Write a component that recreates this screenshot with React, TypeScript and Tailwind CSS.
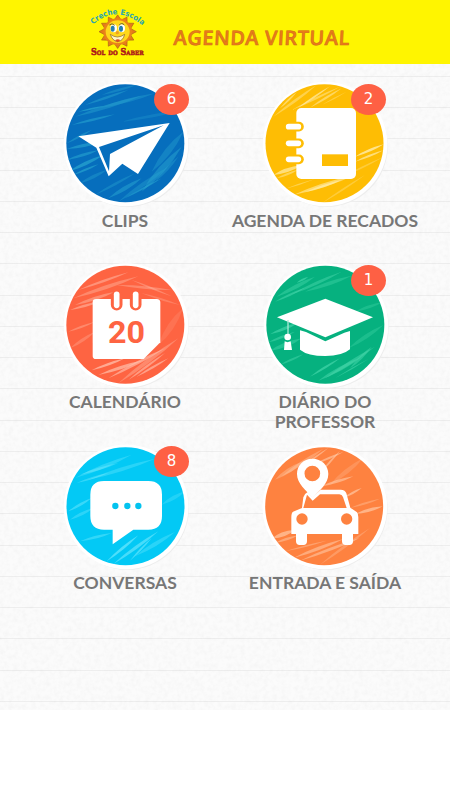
import React from 'react';

type Streak = [number, number, number, number, number, number];

/* One chalk stroke: a thin sliver that is pointed at both ends. */
function sliver([x1, y1, x2, y2, w]: Streak) {
  const mx = (x1 + x2) / 2;
  const my = (y1 + y2) / 2;
  return `M${x1} ${y1}Q${mx - w} ${my - w} ${x2} ${y2}Q${mx + w} ${my + w} ${x1} ${y1}Z`;
}

interface DiscProps {
  id: string;
  viewBox: string;
  cx: number;
  cy: number;
  color: string;
  tint: string;
  streaks: Streak[];
  children: React.ReactNode;
}

function Disc({ id, viewBox, cx, cy, color, tint, streaks, children }: DiscProps) {
  return (
    <svg className="block h-[130px] w-[130px]" viewBox={viewBox} aria-hidden="true">
      <defs>
        <clipPath id={id}>
          <circle cx={cx} cy={cy} r="177" />
        </clipPath>
      </defs>
      <circle cx={cx + 6} cy={cy + 7} r="184" fill="#ededed" />
      <circle cx={cx + 2} cy={cy + 2} r="187" fill="#ffffff" />
      <circle cx={cx} cy={cy} r="177" fill={color} />
      <g clipPath={`url(#${id})`} fill={tint}>
        {streaks.map((s, i) => (
          <path key={i} d={sliver(s)} opacity={s[5]} />
        ))}
      </g>
      {children}
    </svg>
  );
}

const clipsStreaks: Streak[] = [
  [60, 125, 260, 62, 9, 0.45], [90, 90, 220, 45, 6, 0.5], [130, 100, 300, 55, 9, 0.4],
  [50, 150, 180, 118, 6, 0.6], [140, 60, 250, 28, 6, 0.4], [70, 110, 150, 92, 4, 0.75],
  [35, 222, 140, 200, 8, 0.65], [35, 255, 130, 226, 7, 0.6], [40, 290, 145, 240, 8, 0.75],
  [55, 300, 130, 268, 5, 0.7], [75, 325, 155, 285, 8, 0.4], [160, 370, 260, 310, 9, 0.55],
  [190, 380, 340, 275, 9, 0.4], [120, 360, 240, 295, 6, 0.4], [260, 350, 380, 215, 14, 0.5],
  [290, 290, 385, 170, 14, 0.4], [210, 370, 320, 310, 4, 0.65], [200, 140, 385, 105, 8, 0.3],
  [35, 205, 110, 165, 5, 0.5], [300, 320, 370, 245, 7, 0.4],
];
const notesStreaks: Streak[] = [
  [145, 125, 275, 30, 6, 0.4], [165, 100, 215, 52, 4, 0.55], [200, 105, 345, 35, 5, 0.45],
  [220, 98, 315, 34, 4, 0.65], [255, 98, 350, 40, 5, 0.5], [290, 90, 365, 50, 3, 0.35],
  [390, 245, 476, 208, 6, 0.75], [390, 260, 475, 226, 5, 0.65], [345, 310, 475, 246, 4, 0.3],
  [145, 300, 230, 270, 9, 0.65], [155, 310, 220, 284, 5, 0.45], [180, 342, 270, 312, 3, 0.4],
  [205, 360, 390, 300, 9, 0.55], [240, 352, 350, 315, 6, 0.6], [290, 385, 420, 300, 4, 0.3],
];
const calendarStreaks: Streak[] = [
  [55, 130, 250, 64, 9, 0.4], [70, 105, 220, 52, 6, 0.5], [60, 150, 180, 110, 8, 0.45],
  [45, 165, 140, 138, 6, 0.55], [185, 90, 350, 105, 9, 0.38], [230, 75, 350, 124, 10, 0.38],
  [260, 115, 375, 150, 9, 0.3], [40, 230, 120, 200, 5, 0.4], [45, 280, 120, 230, 7, 0.3],
  [110, 346, 210, 310, 6, 0.75], [130, 360, 265, 316, 8, 0.7], [160, 370, 330, 280, 7, 0.65],
  [190, 385, 370, 250, 9, 0.4], [245, 365, 340, 310, 5, 0.65], [220, 375, 330, 294, 5, 0.6],
  [310, 270, 384, 160, 14, 0.15],
];
const diaryStreaks: Streak[] = [
  [65, 125, 180, 65, 9, 0.45], [110, 118, 260, 50, 7, 0.5], [150, 110, 290, 62, 9, 0.4],
  [125, 83, 160, 65, 4, 0.7], [60, 140, 150, 98, 5, 0.6], [45, 238, 130, 203, 7, 0.65],
  [40, 262, 120, 230, 6, 0.55], [45, 288, 140, 250, 10, 0.45], [75, 330, 145, 298, 5, 0.5],
  [165, 365, 255, 310, 5, 0.7], [190, 377, 320, 306, 9, 0.55], [210, 370, 360, 275, 7, 0.55],
  [240, 370, 340, 312, 3, 0.6], [280, 280, 385, 210, 9, 0.35], [300, 170, 385, 140, 7, 0.35],
  [285, 340, 350, 275, 7, 0.55],
];
const chatStreaks: Streak[] = [
  [60, 120, 230, 50, 9, 0.28], [75, 110, 190, 75, 6, 0.35], [100, 125, 300, 62, 9, 0.28],
  [65, 135, 160, 105, 5, 0.35], [40, 220, 110, 180, 6, 0.4], [45, 245, 115, 210, 7, 0.3],
  [75, 310, 170, 285, 7, 0.35], [155, 370, 250, 292, 6, 0.55], [175, 378, 310, 280, 7, 0.5],
  [225, 368, 290, 300, 4, 0.5], [240, 355, 360, 282, 9, 0.28], [320, 200, 390, 160, 9, 0.22],
];
const rideStreaks: Streak[] = [
  [105, 125, 190, 70, 10, 0.35], [125, 115, 250, 32, 8, 0.35], [180, 90, 265, 30, 4, 0.55],
  [220, 80, 310, 42, 5, 0.55], [240, 105, 300, 38, 4, 0.55], [245, 145, 340, 115, 7, 0.55],
  [270, 140, 370, 60, 10, 0.22], [310, 180, 365, 150, 5, 0.6], [345, 228, 428, 205, 8, 0.6],
  [330, 210, 420, 182, 5, 0.35], [95, 302, 165, 275, 10, 0.6], [105, 315, 175, 292, 6, 0.45],
  [135, 340, 260, 308, 4, 0.4], [160, 360, 310, 303, 8, 0.5], [180, 368, 360, 300, 7, 0.5],
  [240, 380, 390, 270, 6, 0.3],
];

function ClipsIcon() {
  return (
    <Disc id="disc-clips" viewBox="15 9 390 390" cx={211} cy={205} color="#066ebd" tint="#27a3cf" streaks={clipsStreaks}>
      <path fill="#fff" d="M70 184 344 144 249 297 202 266 161 304 124 218Z" />
      <path fill="#066ebd" d="M132 216 326 151 165 237 162 289Z" />
    </Disc>
  );
}

function NotesIcon() {
  return (
    <Disc id="disc-notes" viewBox="105 9 390 390" cx={298.5} cy={205} color="#febd04" tint="#fff0b8" streaks={notesStreaks}>
      <rect x="214" y="99" width="179" height="213" rx="15" fill="#fff" />
      {[155, 205, 253].map((y) => (
        <g key={y}>
          <path d={`M190 ${y}H222`} stroke="#febd04" strokeWidth="29" strokeLinecap="round" />
          <path d={`M191 ${y}H220`} stroke="#fff" strokeWidth="17" strokeLinecap="round" />
        </g>
      ))}
      <rect x="291" y="238" width="78" height="35" fill="#febd04" />
    </Disc>
  );
}

function CalendarIcon() {
  return (
    <Disc id="disc-calendar" viewBox="15 12 390 390" cx={211} cy={209.5} color="#fe6442" tint="#ffc0ad" streaks={calendarStreaks}>
      <path fill="#fff" d="M123 132H305Q316 132 316 143V262L266 312H123Q113 312 113 302V142Q113 132 123 132Z" />
      {[185, 242].map((x) => (
        <g key={x}>
          <path d={`M${x} 125V149`} stroke="#fe6442" strokeWidth="35" strokeLinecap="round" />
          <path d={`M${x} 118V151`} stroke="#fff" strokeWidth="17" strokeLinecap="round" />
        </g>
      ))}
      <text x="159" y="264" textLength="111" lengthAdjust="spacingAndGlyphs" fill="#fe6442" className="font-['Roboto',sans-serif] text-[96px] font-bold">20</text>
    </Disc>
  );
}

function DiaryIcon() {
  return (
    <Disc id="disc-diary" viewBox="15 12 390 390" cx={211} cy={209.5} color="#06b17f" tint="#45d6aa" streaks={diaryStreaks}>
      <path fill="#fff" d="M66 187 211 131 354 187 211 247Z" />
      <path fill="#fff" d="M135 226 153 231 211 259 268 233 285 228V283Q262 303 211 303 158 303 135 284Z" />
      <path d="M99 195V240" stroke="#a9e8d5" strokeWidth="4" />
      <circle cx="98" cy="246" r="10" fill="#fff" />
      <path fill="#fff" d="M89 259Q98 264 107 259L111 285H87Z" />
    </Disc>
  );
}

function ChatIcon() {
  return (
    <Disc id="disc-chat" viewBox="15 6 390 390" cx={211.5} cy={204.5} color="#03c9f5" tint="#8cf0ff" streaks={chatStreaks}>
      <path fill="#fff" d="M147 129H280Q321 129 321 170V234Q321 275 280 275H235L173 319V275H147Q106 275 106 234V170Q106 129 147 129Z" />
      <g fill="#03c3ef">
        <circle cx="181" cy="204" r="9.5" />
        <circle cx="217" cy="204" r="9.5" />
        <circle cx="250" cy="204" r="9.5" />
      </g>
    </Disc>
  );
}

function RideIcon() {
  return (
    <Disc id="disc-ride" viewBox="60 6 390 390" cx={252.5} cy={204.5} color="#fe8240" tint="#ffd3b5" streaks={rideStreaks}>
      <path fill="#fff" d="M186 210 190 178Q193 167 203 162L218 178 242 155H302Q316 156 319 166L331 209 351 223Q355 228 355 238V288H154V238Q154 225 159 221Z" />
      <path fill="#fe8240" d="M201 170 218 188 240 169H298Q306 169 309 177L320 210H190Z" />
      <path fill="#fff" fillRule="evenodd" d="M217 62C190 62 171 82 171 108C171 137 198 157 218 180C239 157 265 137 265 108C265 81 244 62 217 62ZM217 83A23 23 0 1 1 217 130A23 23 0 1 1 217 83Z" />
      <path fill="#fff" d="M168 282H201V310Q201 321 190 321H179Q168 321 168 310ZM306 282H339V310Q339 321 328 321H317Q306 321 306 310Z" />
      <circle cx="186" cy="243" r="17" fill="#fe8240" />
      <circle cx="320" cy="243" r="17" fill="#fe8240" />
    </Disc>
  );
}

interface TileProps {
  icon: React.ReactNode;
  lines: string[];
  badge?: number;
  badgeClass?: string;
}

function Tile({ icon, lines, badge, badgeClass = '' }: TileProps) {
  return (
    <a className="flex h-[181px] flex-col items-center">
      <div className="relative">
        {icon}
        {badge !== undefined && (
          <span className={`absolute top-[6px] flex h-[31px] w-[35px] items-center justify-center rounded-[50%] bg-[#fe6044] font-['DejaVu_Sans',sans-serif] text-[15px] leading-none text-white ${badgeClass}`}>
            {badge}
          </span>
        )}
      </div>
      <div className="flex flex-col items-center pt-[3px] font-['Lato',sans-serif] text-[17.5px] leading-5 font-bold whitespace-nowrap text-[#777777]">
        {lines.map((line) => (
          <span key={line}>{line}</span>
        ))}
      </div>
    </a>
  );
}

function Logo() {
  const rays = Array.from({ length: 12 }, (_, i) => {
    const a = ((i * 360) / 12 - 90) * (Math.PI / 180);
    const p = (r: number, d: number) => `${(113 + r * Math.cos(a + d)).toFixed(1)} ${(95 + r * 0.9 * Math.sin(a + d)).toFixed(1)}`;
    return `M${p(40, -0.26)}L${p(56, 0)}L${p(40, 0.26)}Z`;
  }).join('');
  return (
    <svg className="block h-16 w-[75px]" viewBox="0 0 225 192" role="img">
      <path id="logo-arc" d="M39 74Q108 12 184 74" fill="none" />
      <text fill="#2aa5b0" className="font-['DejaVu_Sans',sans-serif] text-[23px] font-bold">
        <textPath href="#logo-arc" textLength="165" lengthAdjust="spacingAndGlyphs">Creche Escola</textPath>
      </text>
      <path d={rays} fill="#e77a18" stroke="#a96018" strokeWidth="2" />
      <ellipse cx="113" cy="95" rx="43" ry="40" fill="#e98319" />
      <ellipse cx="113" cy="95" rx="36" ry="34" fill="#ffd81a" />
      <ellipse cx="101" cy="85" rx="10" ry="12" fill="#fff" />
      <ellipse cx="125" cy="85" rx="10" ry="12" fill="#fff" />
      <ellipse cx="98" cy="86" rx="6" ry="9" fill="#267fb0" />
      <ellipse cx="123" cy="86" rx="6" ry="9" fill="#267fb0" />
      <path d="M88 75Q96 67 104 76M117 76Q125 66 133 75" fill="none" stroke="#6f6420" strokeWidth="3" />
      <circle cx="112" cy="98" r="5" fill="#eea021" />
      <path d="M91 103Q112 119 134 103Q129 124 112 125Q97 122 91 103Z" fill="#fff7c5" stroke="#875d22" strokeWidth="2" />
      <path d="M105 121Q114 115 121 121L113 127Z" fill="#dc4c22" />
      <text x="33" y="164" textLength="158" lengthAdjust="spacingAndGlyphs" fill="#ad171b" stroke="#ad171b" strokeWidth="1.5" className="font-['DejaVu_Serif',serif] text-[27px] font-bold [font-variant-caps:small-caps]">
        Sol do Saber
      </text>
    </svg>
  );
}

function PaperGrain() {
  return (
    <svg className="pointer-events-none absolute inset-0 h-full w-full" aria-hidden="true">
      <filter id="grain">
        <feTurbulence type="fractalNoise" baseFrequency="0.22" numOctaves="3" seed="4" />
        <feColorMatrix values="0 0 0 0 0.45  0 0 0 0 0.45  0 0 0 0 0.45  0.15 0 0 0 -0.055" />
      </filter>
      <rect width="100%" height="100%" filter="url(#grain)" />
    </svg>
  );
}

export default function App() {
  return (
    <div className="flex h-[800px] w-[450px] flex-col overflow-hidden bg-white">
      <header className="flex h-16 shrink-0 bg-[#fff500] pl-20">
        <Logo />
        <h1 className="ml-[19px] origin-left -skew-x-3 pt-[25px] font-['Comic_Sans_MS','Open_Sans',sans-serif] text-[20px] leading-[26px] font-semibold whitespace-nowrap tracking-[0.5px] text-[#ec7a18] [-webkit-text-stroke:0.6px_#d0701c]">
          AGENDA VIRTUAL
        </h1>
      </header>
      <main className="relative h-[646px] shrink-0 bg-[#fbfbfb] bg-[repeating-linear-gradient(to_bottom,transparent_0px,transparent_12px,#eeeeee_12px,#eeeeee_13px,transparent_13px,transparent_31.24px)]">
        <PaperGrain />
        <div className="relative grid grid-cols-[200px_200px] pt-[14px] pl-[25px]">
          <Tile icon={<ClipsIcon />} lines={['CLIPS']} badge={6} badgeClass="left-[94px]" />
          <Tile icon={<NotesIcon />} lines={['AGENDA DE RECADOS']} badge={2} badgeClass="left-[91px]" />
          <Tile icon={<CalendarIcon />} lines={['CALENDÁRIO']} />
          <Tile icon={<DiaryIcon />} lines={['DIÁRIO DO', 'PROFESSOR']} badge={1} badgeClass="left-[91px]" />
          <Tile icon={<ChatIcon />} lines={['CONVERSAS']} badge={8} badgeClass="left-[94px]" />
          <Tile icon={<RideIcon />} lines={['ENTRADA E SAÍDA']} />
        </div>
      </main>
    </div>
  );
}
